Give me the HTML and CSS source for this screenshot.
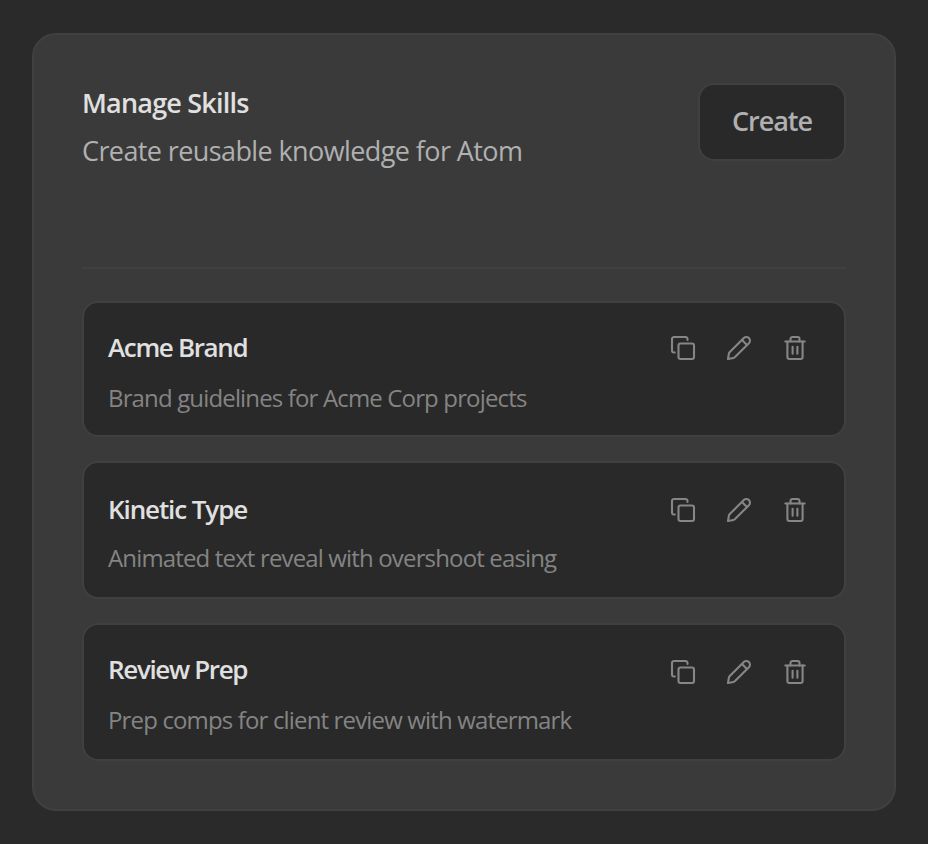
FILE: index.html
```html
<!DOCTYPE html>
<html lang="en">
<head>
    <meta charset="UTF-8">
    <meta name="viewport" content="width=device-width, initial-scale=1.0">
    <title>Manage Skills</title>
    <link rel="stylesheet" href="styles.css">
</head>
<body>
    <svg class="sprite" xmlns="http://www.w3.org/2000/svg">
        <symbol id="icon-copy" viewBox="0 0 32 32">
            <rect x="11.5" y="11.5" width="15.5" height="15.5" rx="2" />
            <path d="M20.5 8V7a2 2 0 0 0-2-2H7a2 2 0 0 0-2 2v11.5a2 2 0 0 0 2 2h.8" />
        </symbol>
        <symbol id="icon-edit" viewBox="0 0 32 32">
            <path d="M5 27l.9-5.4c.1-.7.4-1.1.9-1.6L20.8 6.1a3.5 3.5 0 0 1 5.1 5.1L12 25.1c-.5.5-.9.8-1.6.9z" />
            <path d="M19.3 8.3l4.6 4.6" />
        </symbol>
        <symbol id="icon-trash" viewBox="0 0 32 32">
            <path d="M6.3 9.5h19.4" />
            <path d="M11.5 9.5V7a2 2 0 0 1 2-2h5a2 2 0 0 1 2 2v2.5" />
            <path d="M8.4 9.5V25a2 2 0 0 0 2 2h11.2a2 2 0 0 0 2-2V9.5" />
            <path d="M13.6 14.7v7M18.4 14.7v7" />
        </symbol>
    </svg>

    <main class="panel">
        <header class="panel-header">
            <div>
                <h1>Manage Skills</h1>
                <p class="subtitle">Create reusable knowledge for Atom</p>
            </div>
            <button type="button" class="create">Create</button>
        </header>

        <ul class="skills">
            <li class="skill">
                <div class="skill-text">
                    <h2>Acme Brand</h2>
                    <p>Brand guidelines for Acme Corp projects</p>
                </div>
                <div class="actions">
                    <button type="button" aria-label="Duplicate"><svg><use href="#icon-copy" /></svg></button>
                    <button type="button" aria-label="Edit"><svg><use href="#icon-edit" /></svg></button>
                    <button type="button" aria-label="Delete"><svg><use href="#icon-trash" /></svg></button>
                </div>
            </li>
            <li class="skill kinetic">
                <div class="skill-text">
                    <h2>Kinetic Type</h2>
                    <p>Animated text reveal with overshoot easing</p>
                </div>
                <div class="actions">
                    <button type="button" aria-label="Duplicate"><svg><use href="#icon-copy" /></svg></button>
                    <button type="button" aria-label="Edit"><svg><use href="#icon-edit" /></svg></button>
                    <button type="button" aria-label="Delete"><svg><use href="#icon-trash" /></svg></button>
                </div>
            </li>
            <li class="skill">
                <div class="skill-text">
                    <h2>Review Prep</h2>
                    <p>Prep comps for client review with watermark</p>
                </div>
                <div class="actions">
                    <button type="button" aria-label="Duplicate"><svg><use href="#icon-copy" /></svg></button>
                    <button type="button" aria-label="Edit"><svg><use href="#icon-edit" /></svg></button>
                    <button type="button" aria-label="Delete"><svg><use href="#icon-trash" /></svg></button>
                </div>
            </li>
        </ul>
    </main>
</body>
</html>
```
FILE: styles.css
```css
* {
    box-sizing: border-box;
}

body {
    margin: 0;
    height: 844px;
    padding: 33px 32px;
    background: #2a2a2a;
    font-family: 'Open Sans', 'Noto Sans', sans-serif;
}

h1, h2, p, ul {
    margin: 0;
    padding: 0;
    white-space: nowrap;
}

button {
    font-family: inherit;
    cursor: pointer;
}

.sprite {
    display: none;
}

.panel {
    height: 778px;
    padding: 48px;
    background: #3a3a3a;
    border: 2px solid #404040;
    border-radius: 24px;
}

.panel-header {
    display: flex;
    justify-content: space-between;
    align-items: flex-start;
    height: 186px;
    border-bottom: 2px solid #404040;
}

h1 {
    color: #e0e0e0;
    font-size: 27px;
    font-weight: 600;
    line-height: 40px;
    letter-spacing: -0.8px;
}

.subtitle {
    margin-top: 8px;
    color: #b0b0b0;
    font-size: 27px;
    line-height: 40px;
    letter-spacing: -0.6px;
}

.create {
    width: 148px;
    height: 78px;
    padding: 0 0 4px;
    background: #292929;
    border: 2px solid #404040;
    border-radius: 16px;
    color: #b0b0b0;
    font-size: 27px;
    font-weight: 600;
    letter-spacing: -1px;
}

.skills {
    display: flex;
    flex-direction: column;
    gap: 24px;
    margin-top: 32px;
    list-style: none;
}

.skill {
    display: flex;
    justify-content: space-between;
    height: 138px;
    padding: 24px;
    background: #292929;
    border: 2px solid #404040;
    border-radius: 16px;
}

.skill:first-child {
    height: 136px;
}

.skill h2 {
    color: #e0e0e0;
    font-size: 26px;
    font-weight: 600;
    line-height: 40px;
    letter-spacing: -1.35px;
}

.skill p {
    margin-top: 13px;
    color: #848484;
    font-size: 24px;
    line-height: 36px;
    letter-spacing: -0.85px;
}

.kinetic h2 {
    margin-top: 2px;
    letter-spacing: -1.1px;
}

.kinetic p {
    margin-top: 11px;
}

.actions {
    display: flex;
    gap: 24px;
    margin: 7px 9px 0 0;
}

.skill:first-child .actions {
    margin-top: 5px;
}

.actions button {
    width: 32px;
    height: 32px;
    padding: 0;
    background: none;
    border: none;
}

.actions svg {
    display: block;
    width: 32px;
    height: 32px;
    fill: none;
    stroke: #868686;
    stroke-width: 2.1;
    stroke-linecap: round;
    stroke-linejoin: round;
}
```
